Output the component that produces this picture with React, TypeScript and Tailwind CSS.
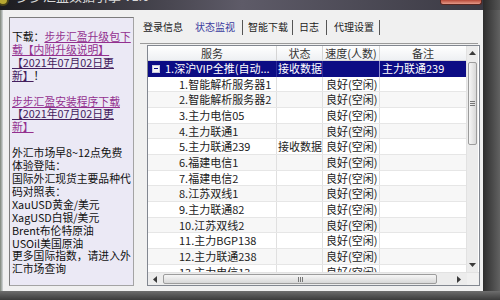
import React from 'react';

const rows = [
  { name: '1.智能解析服务器1', status: '', speed: '良好(空闲)' },
  { name: '2.智能解析服务器2', status: '', speed: '良好(空闲)' },
  { name: '3.主力电信05', status: '', speed: '良好(空闲)' },
  { name: '4.主力联通1', status: '', speed: '良好(空闲)' },
  { name: '5.主力联通239', status: '接收数据', speed: '良好(空闲)' },
  { name: '6.福建电信1', status: '', speed: '良好(空闲)' },
  { name: '7.福建电信2', status: '', speed: '良好(空闲)' },
  { name: '8.江苏双线1', status: '', speed: '良好(空闲)' },
  { name: '9.主力联通82', status: '', speed: '良好(空闲)' },
  { name: '10.江苏双线2', status: '', speed: '良好(空闲)' },
  { name: '11.主力BGP138', status: '', speed: '良好(空闲)' },
  { name: '12.主力联通238', status: '', speed: '良好(空闲)' },
  { name: '13.主力电信13', status: '', speed: '良好(空闲)' },
];

function Arrow({ dir }: { dir: 'up' | 'down' | 'left' | 'right' }) {
  const pts = {
    up: '0,4 3.5,0 7,4',
    down: '0,0 3.5,4 7,0',
    left: '4,0 0,3.5 4,7',
    right: '0,0 4,3.5 0,7',
  }[dir];
  const vertical = dir === 'up' || dir === 'down';
  return (
    <svg width={vertical ? 7 : 4} height={vertical ? 4 : 7} viewBox={vertical ? '0 0 7 4' : '0 0 4 7'}>
      <polygon points={pts} fill="#3a3a3a" />
    </svg>
  );
}

function TitleBar() {
  return (
    <div className="h-[10px] flex bg-[#262626]">
      <div className="w-[483px] flex overflow-hidden bg-gradient-to-r from-[#1c1c20] via-[#5e5b68] to-[#3b3a44]">
        <div className="w-[12px] h-[12px] -mt-[6px] ml-[-3px] rounded-full bg-[#b8a832] border-2 border-[#4a4418]" />
        <div className="ml-[8px] -mt-[12px] text-[13px] leading-[16px] text-[#d8d8d8] whitespace-nowrap">
          步步汇盈数据引擎 V1.0
        </div>
        <div className="ml-auto mr-[1px] w-[42px] h-[5px] rounded-b-[3px] border border-t-0 border-[#5a2620] bg-gradient-to-b from-[#b84838] to-[#e49a8a]" />
      </div>
      <div className="flex-1 bg-gradient-to-r from-[#2a2a2a] to-[#555]" />
    </div>
  );
}

function LeftPanel() {
  const link = 'text-[#93308f] underline';
  const date = 'text-[#44205e] underline';
  return (
    <div className="w-[125px] h-full overflow-hidden border border-[#a4a4a4] border-t-[#7c7c7c] border-l-[#7c7c7c] bg-[#ebe9f5] pt-[12px] pl-[2px] text-[10.8px] leading-[12.9px] text-[#111] whitespace-nowrap">
      <div>下载：<span className={link}>步步汇盈升级包下</span></div>
      <div><span className={link}>载【内附升级说明】</span></div>
      <div><span className={date}>【2021年07月02日更</span></div>
      <div><span className={date}>新】</span>！</div>
      <div>&nbsp;</div>
      <div><span className={link}>步步汇盈安装程序下载</span></div>
      <div><span className={date}>【2021年07月02日更</span></div>
      <div><span className={link}>新】</span></div>
      <div>&nbsp;</div>
      <div>外汇市场早8~12点免费</div>
      <div>体验登陆：</div>
      <div>国际外汇现货主要品种代</div>
      <div>码对照表：</div>
      <div>XauUSD黄金/美元</div>
      <div>XagUSD白银/美元</div>
      <div>Brent布伦特原油</div>
      <div>USOil美国原油</div>
      <div>更多国际指数，请进入外</div>
      <div>汇市场查询</div>
    </div>
  );
}

function Tabs() {
  return (
    <div className="h-[27px] mr-[2px] flex items-start pt-[3px] border-b border-[#9a9a9a] text-[10px] leading-[14px] text-[#222] whitespace-nowrap">
      <span className="ml-[3px]">登录信息</span>
      <span className="ml-[12px] text-[#3b3b9e]">状态监视</span>
      <span className="ml-[7px] w-px h-[15px] bg-[#555]" />
      <span className="ml-[5px]">智能下载</span>
      <span className="ml-[4px] w-px h-[15px] bg-[#555]" />
      <span className="ml-[6px]">日志</span>
      <span className="ml-[7px] w-px h-[15px] bg-[#555]" />
      <span className="ml-[7px]">代理设置</span>
      <span className="ml-[5px] w-px h-[15px] bg-[#555]" />
    </div>
  );
}

function VScroll() {
  return (
    <div className="w-[12px] flex flex-col bg-[#ececec] border-l border-[#e2e2e2]">
      <div className="h-[14px] flex items-center justify-center">
        <Arrow dir="up" />
      </div>
      <div className="mt-[2px] mx-[1px] h-[83px] rounded-[2px] border border-[#9c9c9c] bg-gradient-to-r from-[#f6f6f6] to-[#d8d8d8] flex flex-col items-center justify-center gap-px">
        <div className="w-[5px] h-px bg-[#777]" />
        <div className="w-[5px] h-px bg-[#777]" />
        <div className="w-[5px] h-px bg-[#777]" />
      </div>
      <div className="flex-1" />
      <div className="h-[14px] flex items-center justify-center">
        <Arrow dir="down" />
      </div>
    </div>
  );
}

function HScroll() {
  return (
    <div className="h-[13px] flex bg-[#ececec] border-t border-[#e2e2e2]">
      <div className="w-[13px] flex items-center justify-center">
        <Arrow dir="left" />
      </div>
      <div className="ml-[2px] my-[1px] w-[274px] rounded-[2px] border border-[#9c9c9c] bg-gradient-to-b from-[#f6f6f6] to-[#d8d8d8] flex items-center justify-center gap-px">
        <div className="w-px h-[5px] bg-[#777]" />
        <div className="w-px h-[5px] bg-[#777]" />
        <div className="w-px h-[5px] bg-[#777]" />
      </div>
      <div className="flex-1" />
      <div className="w-[16px] flex items-center justify-center">
        <Arrow dir="right" />
      </div>
      <div className="w-[12px] bg-[#f0f0f0]" />
    </div>
  );
}

function ListView() {
  return (
    <div className="ml-[7px] mt-[1px] flex-1 min-h-0 flex flex-col border border-[#828790] bg-white">
      <div className="flex-1 min-h-0 flex">
        <div className="w-[318px] overflow-hidden flex flex-col text-[11px] text-[#222] whitespace-nowrap">
          <div className="h-[15px] shrink-0 flex leading-[14px] text-[#333] bg-gradient-to-b from-white to-[#eef0f3] border-b border-[#d5d5d5]">
            <div className="w-[129px] text-center border-r border-[#d5d5d5]">服务</div>
            <div className="w-[46px] text-center border-r border-[#d5d5d5]">状态</div>
            <div className="w-[57px] text-center border-r border-[#d5d5d5]">速度(人数)</div>
            <div className="flex-1 text-center">备注</div>
          </div>
          <div className="h-[15.67px] shrink-0 flex leading-[15px] bg-[#0c0c84] text-white">
            <div className="w-[129px] flex items-center pl-[4px] overflow-hidden border-r border-[#2a2a9a]">
              <span className="w-[8px] h-[8px] shrink-0 bg-[#f4f4f4] border border-[#c8c8e0] flex items-center justify-center">
                <span className="w-[4px] h-px bg-[#0c0c84]" />
              </span>
              <span className="ml-[5px]">1.深沪VIP全推(自动...</span>
            </div>
            <div className="w-[46px] pl-[1px] border-r border-[#2a2a9a]">接收数据</div>
            <div className="w-[57px] border-r border-[#8a8ad0]" />
            <div className="flex-1 pl-[2px]">主力联通239</div>
          </div>
          {rows.map((r, i) => (
            <div
              key={r.name}
              className={`h-[15.67px] shrink-0 flex leading-[15px] border-b border-[#e6e6e6] ${i % 2 === 1 ? 'bg-[#f7f7f7]' : 'bg-white'}`}
            >
              <div className="w-[129px] pl-[31px] overflow-hidden border-r border-[#e0e0e0]">{r.name}</div>
              <div className="w-[46px] pl-[1px] overflow-hidden border-r border-[#e0e0e0]">{r.status}</div>
              <div className="w-[57px] pl-[3px] overflow-hidden border-r border-[#e0e0e0]">{r.speed}</div>
              <div className="flex-1" />
            </div>
          ))}
        </div>
        <VScroll />
      </div>
      <HScroll />
    </div>
  );
}

export default function App() {
  return (
    <div className="w-[500px] h-[300px] overflow-hidden flex flex-col bg-[#3a3a3a] font-['Noto_Sans_CJK_SC',sans-serif]">
      <TitleBar />
      <div className="h-[281px] flex">
        <div className="w-[483px] flex bg-[#f0f0f0]">
          <div className="w-[3px] bg-gradient-to-r from-[#7c8478] to-[#d4d8da]" />
          <div className="flex-1 flex pl-[6px] pt-[7px] pb-[5px] pr-[3px]">
            <LeftPanel />
            <div className="ml-[6px] flex-1 flex flex-col">
              <Tabs />
              <ListView />
            </div>
          </div>
        </div>
        <div className="flex-1 bg-gradient-to-r from-[#2e2e2e] to-[#626262]" />
      </div>
      <div className="flex-1 bg-gradient-to-b from-[#6e6e6e] to-[#3c3c3c]" />
    </div>
  );
}
